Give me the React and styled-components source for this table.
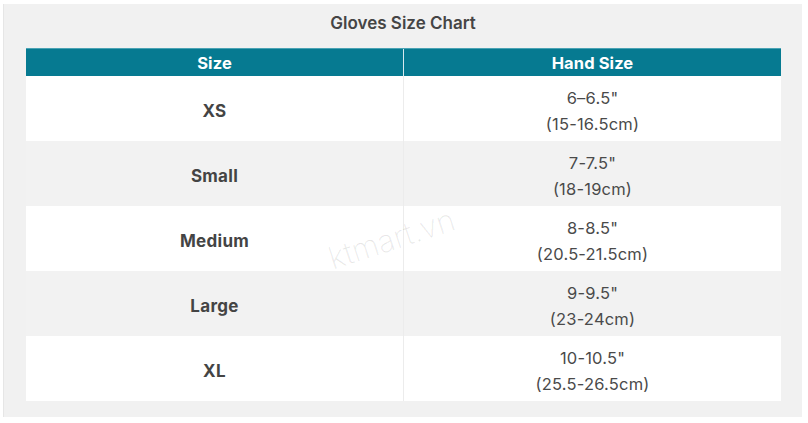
import React from 'react';
import styled, { createGlobalStyle } from 'styled-components';

const rows = [
  { size: 'XS', inch: '6–6.5"', cm: '(15-16.5cm)' },
  { size: 'Small', inch: '7-7.5"', cm: '(18-19cm)' },
  { size: 'Medium', inch: '8-8.5"', cm: '(20.5-21.5cm)' },
  { size: 'Large', inch: '9-9.5"', cm: '(23-24cm)' },
  { size: 'XL', inch: '10-10.5"', cm: '(25.5-26.5cm)' },
];

const App = () => {
  return (
    <>
      <GlobalStyle />
      <Panel>
        <Title>Gloves Size Chart</Title>
        <Table>
          <HeadRow>
            <HeadCell>Size</HeadCell>
            <HeadCell $divider>Hand Size</HeadCell>
          </HeadRow>
          {rows.map((row, i) => (
            <Row key={row.size} $alt={i % 2 === 1}>
              <SizeCell>{row.size}</SizeCell>
              <ValueCell>
                <span>{row.inch}</span>
                <span>{row.cm}</span>
              </ValueCell>
            </Row>
          ))}
          <Watermark>ktmart.vn</Watermark>
        </Table>
      </Panel>
    </>
  );
};

const GlobalStyle = createGlobalStyle`
  body {
    margin: 0;
    background: #fff;
    font-family: Inter, "Open Sans", sans-serif;
    color: #444;
  }
`;

const Panel = styled.div`
  margin: 4px 0 0 3px;
  width: 799px;
  height: 413px;
  box-sizing: border-box;
  background: #f1f1f1;
  padding: 0 22px 0 22px;
  border-left: 1px solid #e6e6e6;
`;

const Title = styled.h1`
  margin: 0;
  height: 44px;
  display: flex;
  align-items: center;
  justify-content: center;
  font-size: 17px;
  font-weight: 600;
  color: #454545;
  padding-bottom: 6px;
  box-sizing: border-box;
`;

const Table = styled.div`
  position: relative;
  width: 755px;
  display: flex;
  flex-direction: column;
`;

const HeadRow = styled.div`
  display: grid;
  grid-template-columns: 377px 1fr;
  height: 28px;
  background: #067a91;
  border-top: 1px solid #4aa3b4;
  box-sizing: border-box;
`;

const HeadCell = styled.div`
  display: flex;
  align-items: center;
  justify-content: center;
  color: #fff;
  font-size: 16.5px;
  font-weight: 700;
  letter-spacing: 0.1px;
  border-left: ${(p) => (p.$divider ? '1px solid #d7e9ee' : 'none')};
`;

const Row = styled.div`
  display: grid;
  grid-template-columns: 377px 1fr;
  height: 65px;
  background: ${(p) => (p.$alt ? '#f2f2f2' : '#fff')};
`;

const SizeCell = styled.div`
  display: flex;
  align-items: center;
  justify-content: center;
  font-size: 17px;
  font-weight: 700;
  letter-spacing: 0.3px;
  color: #444;
  padding-top: 4px;
`;

const ValueCell = styled.div`
  display: flex;
  flex-direction: column;
  align-items: center;
  justify-content: center;
  border-left: 1px solid #ececec;
  font-size: 16.5px;
  letter-spacing: 0.2px;
  line-height: 26px;
  color: #4a4a4a;
  padding-top: 4px;
`;

const Watermark = styled.div`
  position: absolute;
  left: 300px;
  top: 172px;
  font-size: 31px;
  font-weight: 200;
  color: rgba(0, 0, 0, 0.09);
  transform: rotate(-18deg);
  pointer-events: none;
`;

export default App;
